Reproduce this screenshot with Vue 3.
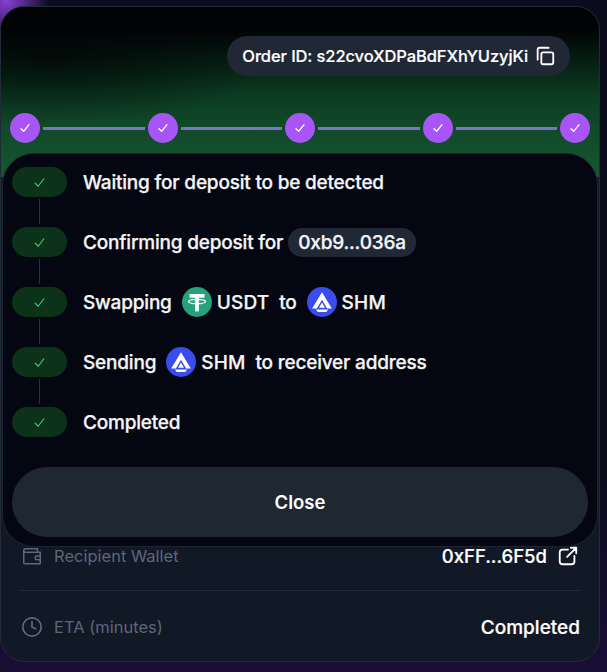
<template>
  <div class="page">
    <div class="card">
      <div class="hero">
        <div class="order-row">
          <div class="order-pill">
            <span>Order ID: s22cvoXDPaBdFXhYUzyjKi</span>
            <svg class="copy" viewBox="0 0 24 24" fill="none" stroke="currentColor" stroke-width="2" stroke-linecap="round" stroke-linejoin="round">
              <rect x="8" y="8" width="13" height="13" rx="2" />
              <path d="M4 16V5a2 2 0 0 1 2-2h10" />
            </svg>
          </div>
        </div>
        <div class="tracker">
          <template v-for="n in 5" :key="n">
            <div class="dot">
              <svg viewBox="0 0 24 24" fill="none" stroke="currentColor" stroke-width="2" stroke-linecap="round" stroke-linejoin="round">
                <path d="M6 13l4 4 8-10" />
              </svg>
            </div>
            <div v-if="n < 5" class="line"></div>
          </template>
        </div>
      </div>

      <div class="details">
        <div class="detail">
          <div class="label">
            <svg class="ico" viewBox="0 0 24 24" fill="none" stroke="currentColor" stroke-width="1.6" stroke-linecap="round" stroke-linejoin="round">
              <path d="M3 6v13a1.500 1.500 0 0 0 1.500 1.500h16.500V8H5a2 2 0 0 1-2-2 2 2 0 0 1 2-2h13v4" />
              <path d="M21 12h-3.500a2 2 0 0 0 0 4H21" />
            </svg>
            <span>Recipient Wallet</span>
          </div>
          <div class="value">
            <span>0xFF...6F5d</span>
            <svg class="ico white" viewBox="0 0 24 24" fill="none" stroke="currentColor" stroke-width="2" stroke-linecap="round" stroke-linejoin="round">
              <path d="M12 5H6a3 3 0 0 0-3 3v10a3 3 0 0 0 3 3h10a3 3 0 0 0 3-3v-6" />
              <path d="M11 13L21 3M15 3h6v6" />
            </svg>
          </div>
        </div>
        <div class="detail">
          <div class="label">
            <svg class="ico" viewBox="0 0 24 24" fill="none" stroke="currentColor" stroke-width="1.8" stroke-linecap="round" stroke-linejoin="round">
              <circle cx="12" cy="12" r="10" />
              <path d="M12 6v6l4 2" />
            </svg>
            <span>ETA (minutes)</span>
          </div>
          <div class="value big">Completed</div>
        </div>
      </div>

      <div class="panel">
        <ul class="steps">
          <li v-for="(s, i) in steps" :key="i" class="step">
            <div class="badge">
              <svg viewBox="0 0 24 24" fill="none" stroke="currentColor" stroke-width="1.8" stroke-linecap="round" stroke-linejoin="round">
                <path d="M5 13l5 5 9-12" />
              </svg>
            </div>
            <div class="text">
              <template v-for="(p, j) in s" :key="j">
                <span v-if="p.t">{{ p.t }}</span>
                <span v-else-if="p.sym" class="sym">{{ p.sym }}</span>
                <span v-else-if="p.addr" class="addr">{{ p.addr }}</span>
                <svg v-else-if="p.coin === 'usdt'" class="coin" viewBox="0 0 32 32">
                  <circle cx="16" cy="16" r="16" fill="#26a17b" />
                  <rect x="8" y="7.500" width="16" height="4" rx="0.500" fill="#fff" />
                  <rect x="14" y="9" width="4" height="17" fill="#fff" />
                  <ellipse cx="16" cy="15.500" rx="9" ry="2.300" fill="none" stroke="#fff" stroke-width="1.400" />
                </svg>
                <svg v-else class="coin" viewBox="0 0 32 32">
                  <circle cx="16" cy="16" r="16" fill="#3a4cee" />
                  <path fill="#fff" d="M16 5.500l10.500 17.500h-5l-5.500-9.500-5.500 9.500h-5z" />
                  <path fill="#fff" d="M16 16.500l3.200 5.500h-6.400z" />
                  <path fill="#fff" d="M9.500 24h13l-2 2.700h-9z" />
                </svg>
              </template>
            </div>
          </li>
        </ul>
        <button class="close">Close</button>
      </div>
    </div>
  </div>
</template>

<script setup>
const steps = [
  [{ t: 'Waiting for deposit to be detected' }],
  [{ t: 'Confirming deposit for' }, { addr: '0xb9...036a' }],
  [{ t: 'Swapping' }, { coin: 'usdt' }, { sym: 'USDT' }, { t: '\u00a0to' }, { coin: 'shm' }, { sym: 'SHM' }],
  [{ t: 'Sending' }, { coin: 'shm' }, { sym: 'SHM' }, { t: '\u00a0to receiver address' }],
  [{ t: 'Completed' }]
]
</script>

<style>
html, body {
  margin: 0;
  background: #0b0d1f;
}
</style>

<style scoped>
.page {
  width: 607px;
  height: 672px;
  box-sizing: border-box;
  padding-top: 6px;
  overflow: hidden;
  font-family: Inter, "Liberation Sans", sans-serif;
  color: #fff;
  background:
    radial-gradient(circle at 6px 0, #8a3fd8 0, rgba(138, 63, 216, 0.6) 18px, rgba(138, 63, 216, 0) 44px),
    linear-gradient(180deg, #0a0c1c 0, #0a0c1c 72%, #1a0e35 100%);
}
.card {
  position: relative;
  width: 600px;
  height: 656px;
  box-sizing: border-box;
  display: flex;
  flex-direction: column;
  justify-content: space-between;
  background: #121926;
  border: 1px solid #222a38;
  border-radius: 24px;
  overflow: hidden;
}
.hero {
  height: 170px;
  box-sizing: border-box;
  padding: 29px 9px 0;
  background:
    radial-gradient(ellipse 230px 70px at 50px 48px, rgba(1, 4, 6, 0.7) 0, rgba(1, 4, 6, 0) 100%),
    linear-gradient(180deg, #010204 0, #010406 14%, #0b3a20 50%, #11492a 70%, #15572f 100%);
}
.order-row {
  display: flex;
  justify-content: flex-end;
  padding-right: 20px;
}
.order-pill {
  display: flex;
  align-items: center;
  gap: 6px;
  height: 40px;
  box-sizing: border-box;
  padding: 0 14px 0 15px;
  border-radius: 20px;
  background: #202836;
  font-size: 16.5px;
  font-weight: 500;
  letter-spacing: -0.1px;
  -webkit-text-stroke: 0.2px currentColor;
}
.copy {
  width: 22px;
  height: 22px;
}
.tracker {
  display: flex;
  align-items: center;
  gap: 3px;
  margin-top: 37px;
}
.dot {
  flex: none;
  width: 30px;
  height: 30px;
  border-radius: 50%;
  background: #a855f7;
  display: flex;
  align-items: center;
  justify-content: center;
}
.dot svg {
  width: 16px;
  height: 16px;
}
.line {
  flex: 1;
  height: 3px;
  background: #7b73c4;
}
.details {
  padding: 0 19px;
}
.detail {
  display: flex;
  align-items: center;
  justify-content: space-between;
  box-sizing: border-box;
  height: 71px;
  padding-top: 2px;
}
.detail + .detail {
  border-top: 1px solid #222a38;
}
.label {
  display: flex;
  align-items: center;
  gap: 11px;
  color: #5c6678;
  font-size: 16.5px;
}
.value {
  display: flex;
  align-items: center;
  gap: 10px;
  font-weight: 500;
  font-size: 18.500px;
  -webkit-text-stroke: 0.2px currentColor;
}
.value.big {
  font-size: 19px;
}
.ico {
  width: 22px;
  height: 22px;
  margin-left: 1px;
  color: #5f6979;
}
.ico.white {
  color: #fff;
  margin: 0 1px 0 0;
}
.panel {
  position: absolute;
  left: 1px;
  top: 146px;
  width: 596px;
  height: 394px;
  box-sizing: border-box;
  display: flex;
  flex-direction: column;
  justify-content: space-between;
  padding: 13px 9px 9px;
  background: #040711;
  border: 1px solid #1d2431;
  border-radius: 32px;
}
.steps {
  list-style: none;
  margin: 0;
  padding: 0;
  display: flex;
  flex-direction: column;
  gap: 30px;
}
.step {
  position: relative;
  display: flex;
  align-items: center;
  gap: 16px;
  height: 30px;
}
.step:not(:last-child)::after {
  content: "";
  position: absolute;
  left: 27px;
  top: 32px;
  width: 1px;
  height: 25px;
  background: #2a303b;
}
.badge {
  flex: none;
  width: 55px;
  height: 30px;
  border-radius: 15px;
  background: #0c3219;
  color: #3ed16f;
  display: flex;
  align-items: center;
  justify-content: center;
}
.badge svg {
  width: 15px;
  height: 15px;
}
.text {
  display: flex;
  align-items: center;
  gap: 5px;
  font-size: 19px;
  font-weight: 500;
  letter-spacing: -0.2px;
  color: #f4f5f7;
  -webkit-text-stroke: 0.25px currentColor;
}
.sym {
  letter-spacing: 0.2px;
}
.addr {
  padding: 3px 10px;
  border-radius: 14px;
  background: #202836;
}
.coin {
  width: 30px;
  height: 30px;
  margin-left: 5px;
}
.close {
  height: 70px;
  border: 0;
  border-radius: 35px;
  background: #1f2733;
  color: #fff;
  font-family: inherit;
  font-size: 18.5px;
  font-weight: 600;
}
</style>
